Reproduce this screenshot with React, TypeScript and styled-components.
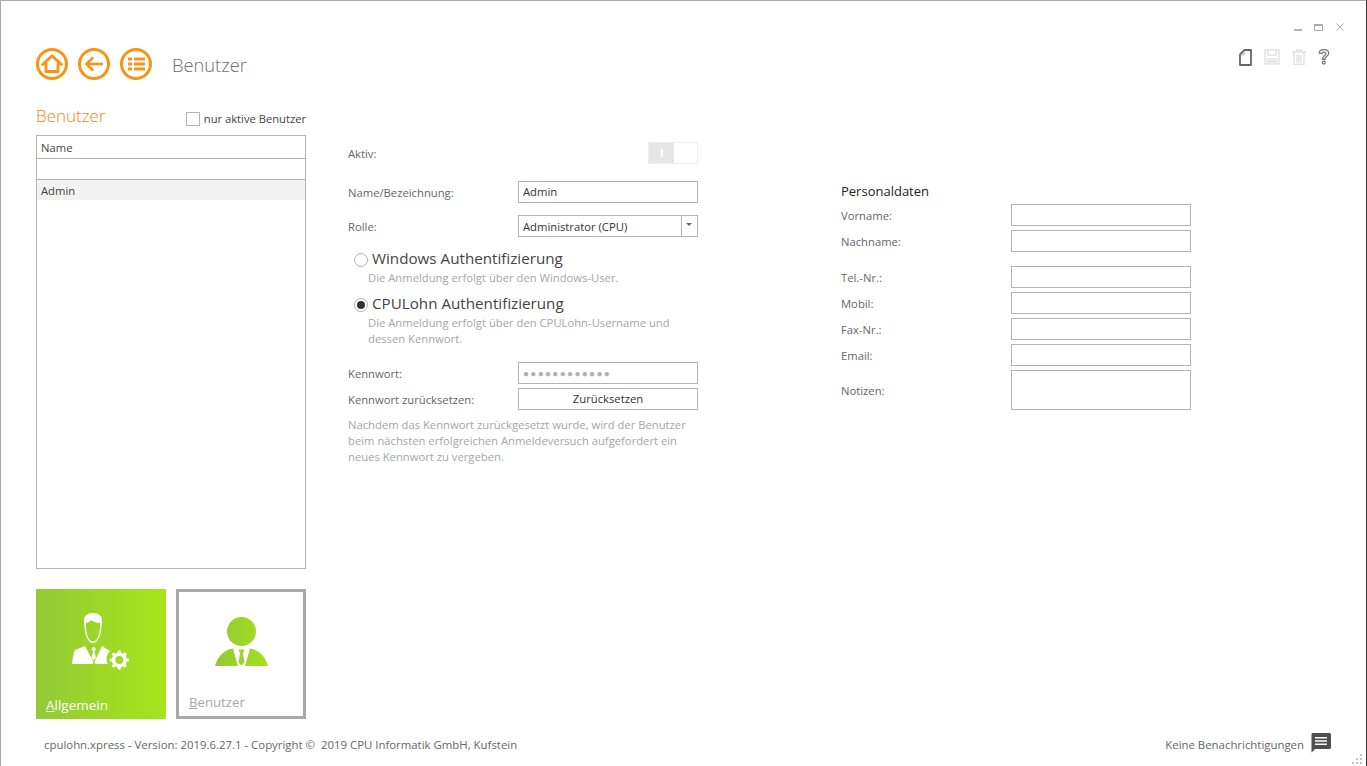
import React from "react";
import styled, { createGlobalStyle } from "styled-components";

const FONT = `"Open Sans", "Noto Sans", "Liberation Sans", sans-serif`;
const ORANGE = "#fb9213";

function HomeIcon() {
  return (
    <svg width="32" height="32" viewBox="0 0 32 32" fill="none" stroke={ORANGE}>
      <circle cx="16" cy="16" r="14.500" strokeWidth="3" />
      <path d="M5.800 17.200 16 7.800l10.200 9.400M10 14.800V23.500h12v-8.700" strokeWidth="2.800" strokeLinejoin="round" />
    </svg>
  );
}

function BackIcon() {
  return (
    <svg width="32" height="32" viewBox="0 0 32 32" fill="none" stroke={ORANGE}>
      <circle cx="16" cy="16" r="14.500" strokeWidth="3" />
      <path d="M25 16H9M15 9.500 8.500 16l6.500 6.500" strokeWidth="2.600" />
    </svg>
  );
}

function ListIcon() {
  return (
    <svg width="32" height="32" viewBox="0 0 32 32" fill="none" stroke={ORANGE}>
      <circle cx="16" cy="16" r="14.500" strokeWidth="3" />
      <path d="M8 11h4M8 16h4M8 21h4M14 11h11M14 16h11M14 21h11" strokeWidth="3" />
    </svg>
  );
}

function NewIcon() {
  return (
    <svg width="13" height="17" viewBox="0 0 13 17" fill="none" stroke="#666" strokeWidth="1.800" strokeLinejoin="round">
      <path d="M5.500 1H12v15H1V5.500z" />
      <path d="M5 2v3.800H1.500" stroke="#aaa" strokeWidth="1" />
    </svg>
  );
}

function SaveIcon() {
  return (
    <svg width="16" height="16" viewBox="0 0 16 16" fill="none" stroke="#e2e2e2" strokeWidth="1.500">
      <path d="M1 1h14v14H1zM4 1v5h8V1M3.500 10h9v5h-9z" />
      <path d="M4.500 12.500h7" stroke="#d4d4d4" />
    </svg>
  );
}

function TrashIcon() {
  return (
    <svg width="14" height="16" viewBox="0 0 14 16" fill="none" stroke="#e2e2e2" strokeWidth="1.500">
      <path d="M0 3h14M4.500 3V1h5v2M2 3v12.300h10V3M5 5.500v8M9 5.500v8M7 5.500v8" />
    </svg>
  );
}

function HelpIcon() {
  return (
    <svg width="12" height="18" viewBox="0 0 14 19" fill="none" stroke="#777" strokeWidth="1.500">
      <path d="M1.500 5C1.500 2.500 3.700 1 6.800 1c3.200 0 5.700 1.500 5.700 4.200 0 3.400-4.400 3.500-4.400 7H5.300c0-4.400 4-4.200 4-6.800 0-1-.9-1.700-2.400-1.700-1.500 0-2.300.8-2.300 1.800z" />
      <circle cx="6.700" cy="16" r="1.700" />
    </svg>
  );
}

function CloseIcon() {
  return (
    <svg width="8" height="8" viewBox="0 0 8 8" stroke="#aaa" strokeWidth="1">
      <path d="M.5.500l7 7M7.500.500l-7 7" />
    </svg>
  );
}

function ManagerGearIcon() {
  return (
    <svg width="58" height="57" viewBox="0 0 58 57" fill="#fff">
      <path
        fillRule="evenodd"
        d="M21 0C14 0 11.500 4 12 9l.5 5C13 22 16 30 21 30s8-8 8.500-16l.5-5C30.500 4 28 0 21 0zM13.800 10C16 10 18 8.500 19 7c2.500 2 6 3 9.200 2.800L28 15c-.5 7-3 13.500-7 13.500S14.500 22 14 15z"
      />
      <path d="M13 33 3 37c-1.500 3-2.500 8-3 14h20.500l1-2zM30 33l-7.500 16 1 2H36c-1.500-2-2-5-1-8 .6-2 1.800-3.500 3-5z" />
      <path d="M21.700 33.500 19.500 36l1.500 2.500-1.500 6 2.200 3 2.200-3-1.500-6 1.500-2.500z" />
      <circle cx="47.300" cy="47" r="5.800" fill="none" stroke="#fff" strokeWidth="3.600" />
      <path
        d="M47.300 37.500v3M47.300 53.500v3M37.800 47h3M53.800 47h3M40.600 40.300l2.100 2.100M51.900 51.600l2.100 2.100M54 40.300l-2.100 2.100M42.700 51.600l-2.100 2.100"
        stroke="#fff"
        strokeWidth="3"
      />
    </svg>
  );
}

function ManagerIcon() {
  return (
    <svg width="53" height="49" viewBox="0 0 53 49">
      <defs>
        <linearGradient id="man" gradientUnits="userSpaceOnUse" x1="0" x2="53" y1="0" y2="0">
          <stop offset="0" stopColor="#93c936" />
          <stop offset="1" stopColor="#a4e01e" />
        </linearGradient>
      </defs>
      <circle cx="26.500" cy="14.500" r="14.500" fill="url(#man)" />
      <path d="M0 49C2 41 7 35 15 32l3-.5L23 49zM53 49C51 41 46 35 38 32l-3-.5L30 49z" fill="url(#man)" />
      <path d="M23.500 32.500h6l-1.500 4 1.500 9-3 3-3-3 1.500-9z" fill="url(#man)" />
    </svg>
  );
}

function ChatIcon() {
  return (
    <svg width="20" height="20" viewBox="0 0 20 20">
      <path d="M1.500 0h17A1.500 1.500 0 0 1 20 1.500v13a1.500 1.500 0 0 1-1.500 1.500H4l-3.500 3.500V1.500A1.500 1.500 0 0 1 1.500 0z" fill="#4f4f4f" />
      <path d="M4 4h12v1.600H4zM4 7.200h12v1.600H4zM4 10.400h12v1.600H4z" fill="#fff" />
    </svg>
  );
}

const GRIP_CELLS = [false, false, true, false, true, true, true, true, true];

export default function App() {
  return (
    <>
      <GlobalStyle />
      <Window>
        <WindowControls>
          <Minimize />
          <Maximize />
          <CloseButton>
            <CloseIcon />
          </CloseButton>
        </WindowControls>

        <Header>
          <NavIcons>
            <HomeIcon />
            <BackIcon />
            <ListIcon />
          </NavIcons>
          <PageTitle>Benutzer</PageTitle>
          <Toolbar>
            <NewIcon />
            <SaveIcon />
            <TrashIcon />
            <HelpIcon />
          </Toolbar>
        </Header>

        <Body>
          <Sidebar>
            <SidebarHead>
              <SectionTitle>Benutzer</SectionTitle>
              <CheckLabel>
                <CheckBox />
                nur aktive Benutzer
              </CheckLabel>
            </SidebarHead>
            <UserList>
              <ListHeader>Name</ListHeader>
              <ListFilter />
              <ListRow>Admin</ListRow>
            </UserList>
            <Tiles>
              <ActiveTile>
                <TileIcon $top={24}>
                  <ManagerGearIcon />
                </TileIcon>
                <TileLabel>
                  <u>A</u>llgemein
                </TileLabel>
              </ActiveTile>
              <OutlineTile>
                <TileIcon $top={25}>
                  <ManagerIcon />
                </TileIcon>
                <OutlineLabel>
                  <u>B</u>enutzer
                </OutlineLabel>
              </OutlineTile>
            </Tiles>
          </Sidebar>

          <MainForm>
            <ToggleRow>
              <Label>Aktiv:</Label>
              <Toggle>
                <ToggleOn>I</ToggleOn>
                <ToggleOff />
              </Toggle>
            </ToggleRow>
            <FormRow>
              <Label>Name/Bezeichnung:</Label>
              <Field>Admin</Field>
            </FormRow>
            <FormRow>
              <Label>Rolle:</Label>
              <Select>
                <SelectText>Administrator (CPU)</SelectText>
                <SelectArrow />
              </Select>
            </FormRow>
            <RadioBlock>
              <RadioLine>
                <Radio />
                <RadioTitle>Windows Authentifizierung</RadioTitle>
              </RadioLine>
              <Hint>Die Anmeldung erfolgt über den Windows-User.</Hint>
              <RadioLine>
                <Radio $checked />
                <RadioTitle>CPULohn Authentifizierung</RadioTitle>
              </RadioLine>
              <Hint>
                Die Anmeldung erfolgt über den CPULohn-Username und
                <br />
                dessen Kennwort.
              </Hint>
            </RadioBlock>
            <PasswordRow>
              <Label>Kennwort:</Label>
              <PasswordField>●●●●●●●●●●●●</PasswordField>
            </PasswordRow>
            <FormRow>
              <Label>Kennwort zurücksetzen:</Label>
              <ResetButton>Zurücksetzen</ResetButton>
            </FormRow>
            <ResetHint>
              Nachdem das Kennwort zurückgesetzt wurde, wird der Benutzer
              <br />
              beim nächsten erfolgreichen Anmeldeversuch aufgefordert ein
              <br />
              neues Kennwort zu vergeben.
            </ResetHint>
          </MainForm>

          <PersonalForm>
            <PersonalTitle>Personaldaten</PersonalTitle>
            <PersonalRow>
              <Label>Vorname:</Label>
              <BlankField />
            </PersonalRow>
            <PersonalRow>
              <Label>Nachname:</Label>
              <BlankField />
            </PersonalRow>
            <PersonalRow $gap={14}>
              <Label>Tel.-Nr.:</Label>
              <BlankField />
            </PersonalRow>
            <PersonalRow>
              <Label>Mobil:</Label>
              <BlankField />
            </PersonalRow>
            <PersonalRow>
              <Label>Fax-Nr.:</Label>
              <BlankField />
            </PersonalRow>
            <PersonalRow>
              <Label>Email:</Label>
              <BlankField />
            </PersonalRow>
            <PersonalRow>
              <Label>Notizen:</Label>
              <NotesField />
            </PersonalRow>
          </PersonalForm>
        </Body>

        <Footer>
          <FooterText>cpulohn.xpress - Version: 2019.6.27.1 - Copyright ©  2019 CPU Informatik GmbH, Kufstein</FooterText>
          <Notifications>
            Keine Benachrichtigungen
            <ChatIcon />
          </Notifications>
        </Footer>
        <Grip>
          {GRIP_CELLS.map((on, i) => (
            <GripDot key={i} $on={on} />
          ))}
        </Grip>
      </Window>
    </>
  );
}

const GlobalStyle = createGlobalStyle`
  html, body {
    margin: 0;
    padding: 0;
    background: #fff;
    overflow: hidden;
  }
  * {
    box-sizing: border-box;
  }
`;

const Window = styled.div`
  position: relative;
  width: 1367px;
  height: 766px;
  background: #fff;
  border-top: 1px solid #ababab;
  border-left: 1px solid #ababab;
  border-right: 1px solid #333;
  font-family: ${FONT};
  font-size: 11.250px;
  color: #444;
  display: flex;
  flex-direction: column;
`;

const WindowControls = styled.div`
  height: 47px;
  padding: 18px 22px 0 0;
  display: flex;
  justify-content: flex-end;
  align-items: flex-start;
  gap: 12px;
`;

const Minimize = styled.div`
  width: 8px;
  height: 2px;
  margin-top: 10px;
  background: #b5b5b5;
`;

const Maximize = styled.div`
  width: 9px;
  height: 7px;
  margin-top: 5px;
  border: 1px solid #a9a9a9;
  border-top-width: 2px;
`;

const CloseButton = styled.div`
  width: 8px;
  height: 8px;
  margin: 4px 0 0 1px;
  display: flex;
`;

const Header = styled.div`
  height: 32px;
  padding: 0 36px 0 35px;
  display: flex;
  align-items: center;
`;

const NavIcons = styled.div`
  display: flex;
  gap: 10px;
`;

const PageTitle = styled.div`
  margin-left: 20px;
  font-size: 18.300px;
  font-weight: 300;
  color: #6e6e6e;
`;

const Toolbar = styled.div`
  align-self: flex-start;
  margin-left: auto;
  display: flex;
  align-items: center;
  gap: 12px;
`;

const Body = styled.div`
  height: 640px;
  padding: 23px 0 0 35px;
  display: flex;
  align-items: flex-start;
`;

const Sidebar = styled.div`
  width: 270px;
`;

const SidebarHead = styled.div`
  height: 32px;
  display: flex;
  align-items: flex-start;
  justify-content: space-between;
`;

const SectionTitle = styled.div`
  font-size: 17px;
  line-height: 25px;
  font-weight: 300;
  color: #f5820f;
`;

const CheckLabel = styled.label`
  margin-top: 8px;
  display: flex;
  align-items: center;
  gap: 4px;
  font-size: 11.200px;
  line-height: 15px;
  color: #444;
`;

const CheckBox = styled.span`
  width: 14px;
  height: 14px;
  border: 1px solid #b4b4b4;
`;

const UserList = styled.div`
  height: 434px;
  border: 1px solid #b4b4b4;
`;

const ListHeader = styled.div`
  height: 23px;
  padding-left: 4px;
  line-height: 23px;
  border-bottom: 1px solid #b4b4b4;
`;

const ListFilter = styled.div`
  height: 21px;
  border-bottom: 1px solid #b4b4b4;
`;

const ListRow = styled.div`
  height: 20px;
  padding-left: 4px;
  line-height: 21px;
  background: #f2f2f2;
`;

const Tiles = styled.div`
  margin-top: 20px;
  display: flex;
  gap: 10px;
`;

const ActiveTile = styled.div`
  position: relative;
  width: 130px;
  height: 130px;
  background: linear-gradient(90deg, #93c936, #a6e51a);
  color: #fff;
`;

const OutlineTile = styled.div`
  position: relative;
  width: 130px;
  height: 130px;
  border: 3px solid #a9a9a9;
`;

const TileIcon = styled.div<{ $top: number }>`
  position: absolute;
  top: ${({ $top }) => $top}px;
  left: 0;
  right: 0;
  display: flex;
  justify-content: center;
`;

const TileLabel = styled.div`
  position: absolute;
  left: 10px;
  bottom: 5px;
  font-size: 13.500px;
`;

const OutlineLabel = styled.div`
  position: absolute;
  left: 10px;
  bottom: 5px;
  font-size: 13.200px;
  color: #a8a8a8;
`;

const MainForm = styled.div`
  width: 350px;
  margin: 39px 0 0 42px;
`;

const Label = styled.div`
  color: #666;
`;

const ToggleRow = styled.div`
  height: 22px;
  margin-bottom: 17px;
  display: flex;
  align-items: center;
  justify-content: space-between;
`;

const Toggle = styled.div`
  width: 50px;
  height: 22px;
  display: flex;
  border: 1px solid #eee;
`;

const ToggleOn = styled.div`
  width: 25px;
  background: #e6e6e6;
  color: #fff;
  font-weight: 700;
  text-align: center;
  line-height: 20px;
`;

const ToggleOff = styled.div`
  flex: 1;
`;

const FormRow = styled.div`
  height: 22px;
  margin-bottom: 12px;
  display: flex;
  align-items: center;
  justify-content: space-between;
`;

const Field = styled.div`
  width: 180px;
  height: 22px;
  padding-left: 4px;
  line-height: 20px;
  border: 1px solid #b4b4b4;
  color: #333;
`;

const Select = styled.div`
  width: 180px;
  height: 22px;
  display: flex;
  border: 1px solid #b4b4b4;
  color: #333;
`;

const SelectText = styled.div`
  flex: 1;
  padding-left: 4px;
  line-height: 21px;
  border-right: 1px solid #b4b4b4;
`;

const SelectArrow = styled.div`
  width: 15px;
  position: relative;
  &::after {
    content: "";
    position: absolute;
    left: 4px;
    top: 7px;
    border: 3px solid transparent;
    border-top: 3px solid #666;
  }
`;

const RadioBlock = styled.div`
  margin: -3px 0 15px 6px;
`;

const RadioLine = styled.div`
  display: flex;
  align-items: center;
  gap: 4px;
  height: 24px;
`;

const Radio = styled.span<{ $checked?: boolean }>`
  position: relative;
  width: 14px;
  height: 14px;
  margin-top: 3px;
  border-radius: 50%;
  border: 1px solid #b4b4b4;
  ${({ $checked }) =>
    $checked &&
    `&::after {
      content: "";
      position: absolute;
      inset: 2px;
      border-radius: 50%;
      background: #333;
    }`}
`;

const RadioTitle = styled.div`
  font-size: 15.200px;
  color: #444;
`;

const Hint = styled.div`
  margin: 0 0 5px 14px;
  line-height: 16px;
  color: #a6a6a6;
`;

const PasswordRow = styled(FormRow)`
  margin-bottom: 4px;
`;

const PasswordField = styled(Field)`
  color: #b0b0b0;
  font-size: 10px;
  letter-spacing: 1.300px;
`;

const ResetButton = styled.div`
  width: 180px;
  height: 22px;
  line-height: 20px;
  text-align: center;
  border: 1px solid #b4b4b4;
  color: #333;
`;

const ResetHint = styled.div`
  margin-top: -5px;
  line-height: 16px;
  color: #a6a6a6;
`;

const PersonalForm = styled.div`
  width: 350px;
  margin: 78px 0 0 143px;
`;

const PersonalTitle = styled.div`
  height: 19px;
  font-size: 13px;
  line-height: 20px;
  color: #222;
`;

const PersonalRow = styled.div<{ $gap?: number }>`
  margin-top: ${({ $gap }) => $gap ?? 4}px;
  display: flex;
  align-items: center;
  justify-content: space-between;
`;

const BlankField = styled.div`
  width: 180px;
  height: 22px;
  border: 1px solid #b4b4b4;
`;

const NotesField = styled(BlankField)`
  height: 40px;
`;

const Footer = styled.div`
  padding: 2px 35px 0 43px;
  height: 46px;
  display: flex;
  align-items: center;
  justify-content: space-between;
  font-size: 11.400px;
  color: #666;
`;

const FooterText = styled.div`
  white-space: pre;
`;

const Notifications = styled.div`
  display: flex;
  align-items: center;
  gap: 7px;
  svg {
    margin-top: -2px;
  }
`;

const Grip = styled.div`
  position: absolute;
  right: 4px;
  bottom: 2px;
  display: grid;
  grid-template-columns: repeat(3, 2px);
  gap: 2px;
`;

const GripDot = styled.span<{ $on: boolean }>`
  width: 2px;
  height: 2px;
  background: ${({ $on }) => ($on ? "#c4c4c4" : "transparent")};
`;
